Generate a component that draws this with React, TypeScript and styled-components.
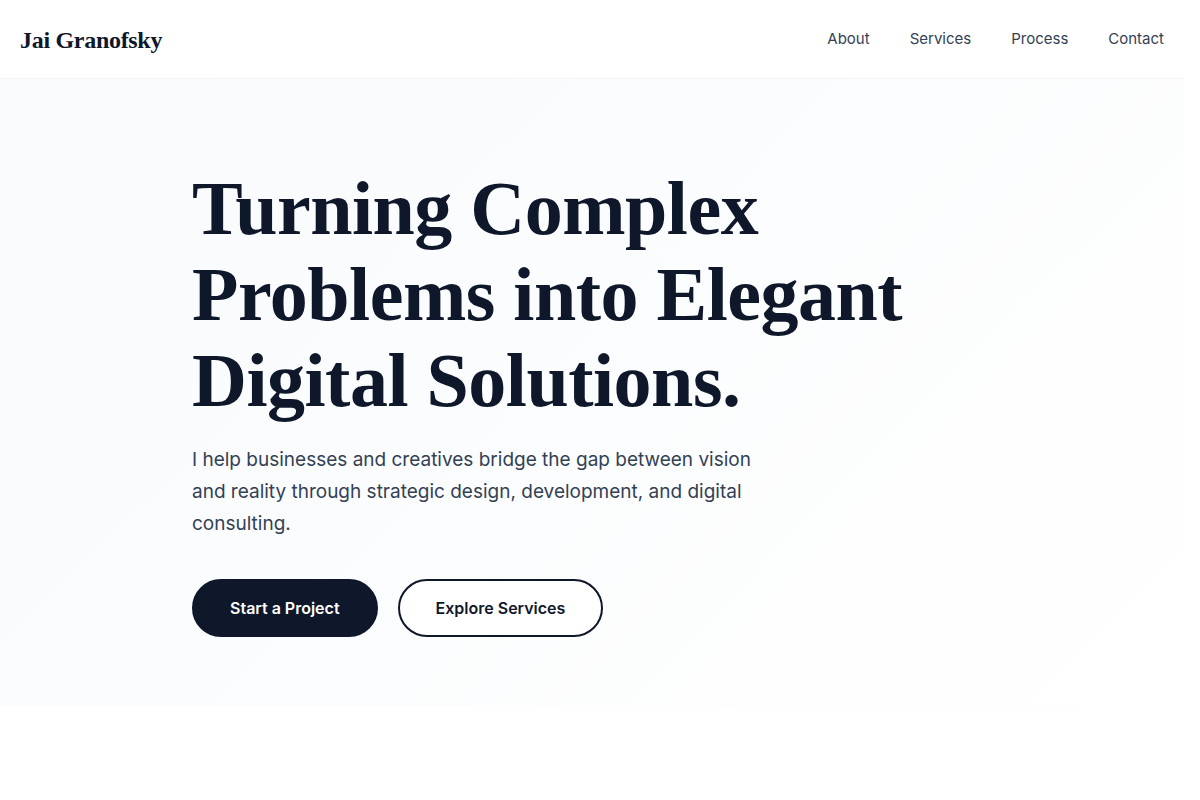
import React from "react";
import styled, { createGlobalStyle } from "styled-components";

const GlobalStyle = createGlobalStyle`
  html, body {
    margin: 0;
    padding: 0;
    background: #ffffff;
  }
  body {
    font-family: "Inter", "Noto Sans", sans-serif;
    color: #0f172a;
    -webkit-font-smoothing: antialiased;
  }
  * {
    box-sizing: border-box;
  }
`;

const Page = styled.div`
  width: 1184px;
  min-height: 800px;
  background: #ffffff;
`;

const Header = styled.header`
  height: 79px;
  display: flex;
  align-items: center;
  justify-content: space-between;
  padding: 0 20px;
  border-bottom: 1px solid #f1f5f9;
  background: #ffffff;
`;

const Logo = styled.a`
  font-family: "Liberation Serif", "DejaVu Serif", serif;
  font-weight: 700;
  font-size: 24px;
  letter-spacing: -0.3px;
  color: #0f172a;
  text-decoration: none;
  margin-top: 2px;
`;

const Nav = styled.nav`
  display: flex;
  gap: 40px;
  margin-top: -2px;
`;

const NavLink = styled.a`
  font-family: "Inter", sans-serif;
  font-size: 15px;
  color: #334155;
  text-decoration: none;
`;

const Hero = styled.section`
  height: 627px;
  background: linear-gradient(135deg, #f8fafc 0%, #ffffff 100%);
  padding-top: 86px;
`;

const Container = styled.div`
  max-width: 800px;
  margin: 0 auto;
`;

const Title = styled.h1`
  margin: 0;
  font-family: "Liberation Serif", "DejaVu Serif", serif;
  font-weight: 700;
  font-size: 76px;
  line-height: 86px;
  letter-spacing: -0.5px;
  color: #0f172a;
`;

const Lead = styled.p`
  margin: 21px 0 0;
  max-width: 590px;
  font-family: "Inter", sans-serif;
  font-size: 19px;
  line-height: 32px;
  color: #334155;
`;

const Actions = styled.div`
  display: flex;
  gap: 20px;
  margin-top: 39px;
`;

const Button = styled.a<{ $variant: "solid" | "outline" }>`
  display: inline-flex;
  align-items: center;
  justify-content: center;
  height: 58px;
  padding: 0 36px;
  border-radius: 999px;
  font-family: "Inter", sans-serif;
  font-size: 16px;
  font-weight: 600;
  text-decoration: none;
  background: ${(p) => (p.$variant === "solid" ? "#0f172a" : "#ffffff")};
  color: ${(p) => (p.$variant === "solid" ? "#ffffff" : "#0f172a")};
  border: 2px solid #0f172a;
`;

const navItems = ["About", "Services", "Process", "Contact"];

export default function App() {
  return (
    <>
      <GlobalStyle />
      <Page>
        <Header>
          <Logo href="#">Jai Granofsky</Logo>
          <Nav>
            {navItems.map((item) => (
              <NavLink key={item} href={`#${item.toLowerCase()}`}>
                {item}
              </NavLink>
            ))}
          </Nav>
        </Header>
        <Hero>
          <Container>
            <Title>
              Turning Complex
              <br />
              Problems into Elegant
              <br />
              Digital Solutions.
            </Title>
            <Lead>
              I help businesses and creatives bridge the gap between vision and
              reality through strategic design, development, and digital
              consulting.
            </Lead>
            <Actions>
              <Button $variant="solid" href="#contact">
                Start a Project
              </Button>
              <Button $variant="outline" href="#services">
                Explore Services
              </Button>
            </Actions>
          </Container>
        </Hero>
      </Page>
    </>
  );
}
